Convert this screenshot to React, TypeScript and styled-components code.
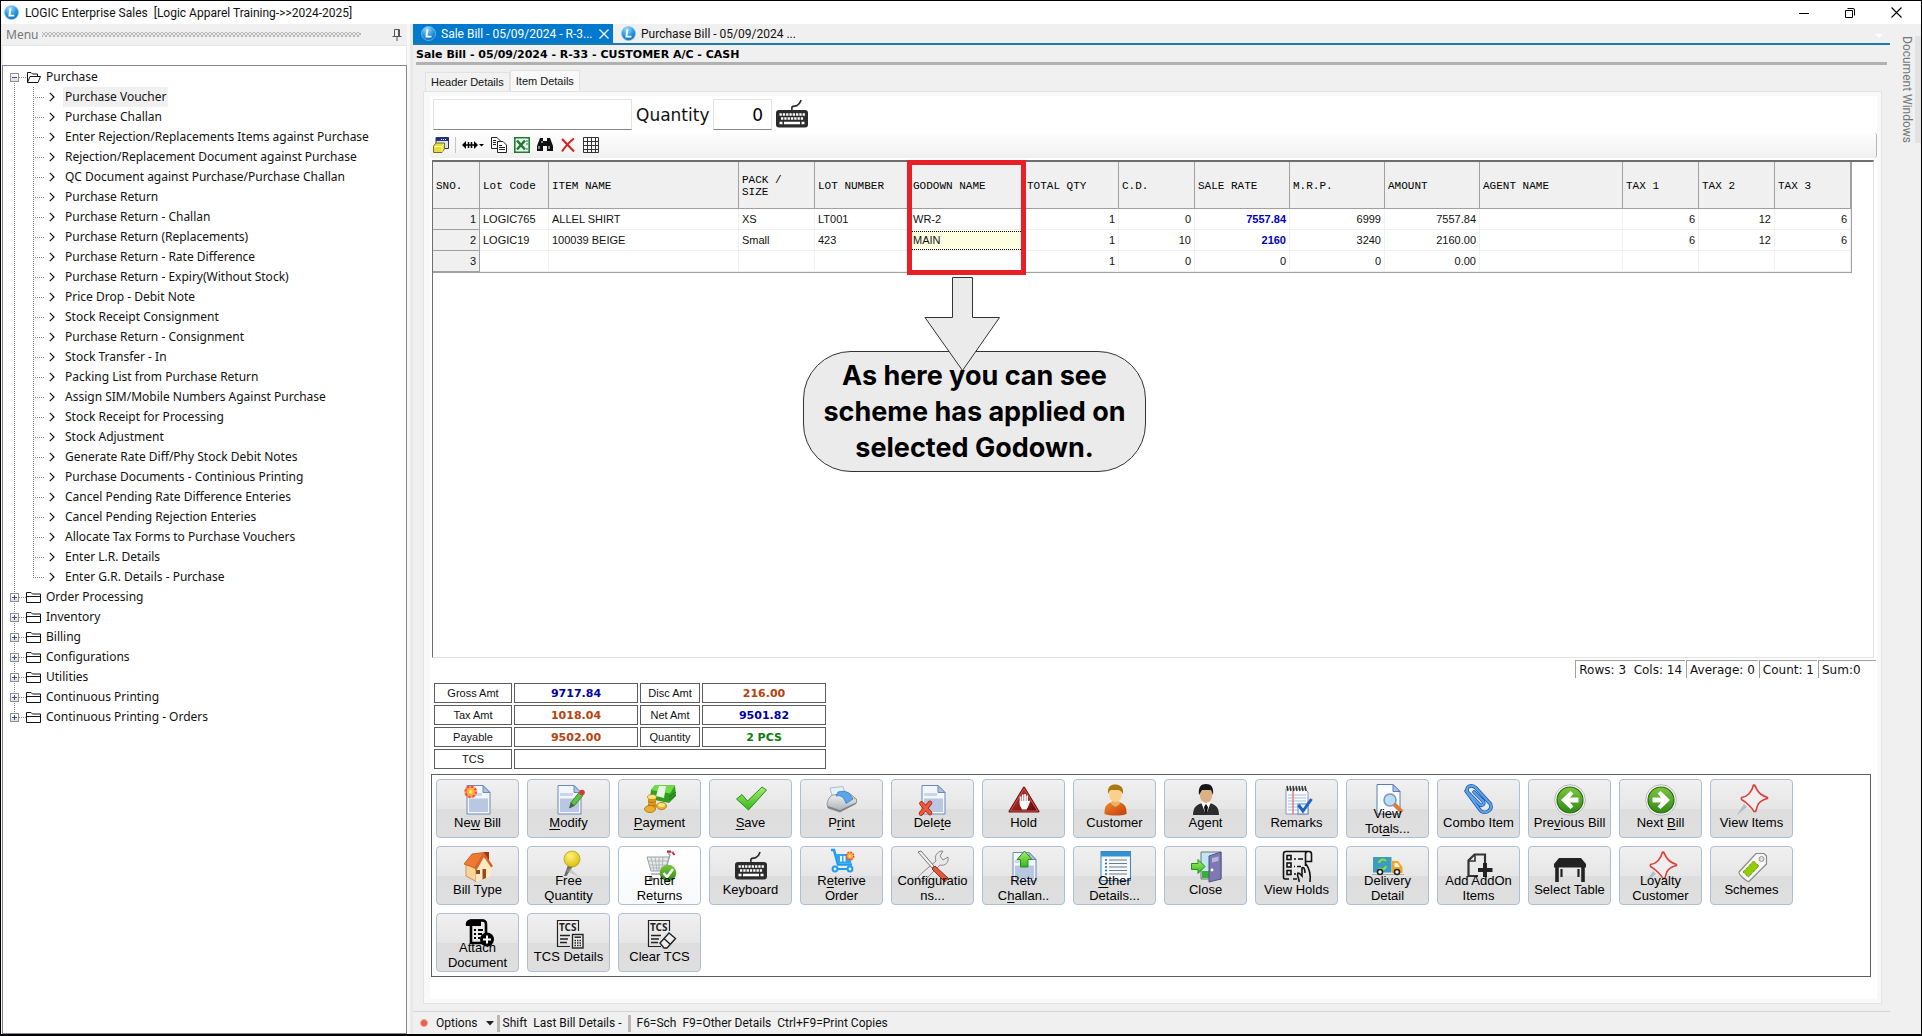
import React from "react";
import styled, { createGlobalStyle, css } from "styled-components";

const ui = `"Noto Sans", "Open Sans", sans-serif`;
const compact = `Roboto, "Noto Sans", sans-serif`;
const arial = `"Liberation Sans", Arial, sans-serif`;
const verdana = `"DejaVu Sans", Verdana, sans-serif`;
const mono = `"Liberation Mono", "Courier New", monospace`;

const Global = createGlobalStyle`
  *, *::before, *::after { box-sizing: border-box; }
  body { margin: 0; background: #fff; font: 12px/16px ${ui}; color: #111; }
  button, input { font: inherit; color: inherit; margin: 0; }
  button { cursor: pointer; }
  ul { list-style: none; margin: 0; padding: 0; }
  svg { display: block; flex: none; }
`;

/* ---------- window frame ---------- */
const Window = styled.div`
  min-height: 100vh;
  display: flex;
  flex-direction: column;
  background: #f0f0f0;
  border: 1px solid #000;
  border-bottom-width: 2px;
`;
const TitleBar = styled.header`
  display: flex;
  align-items: center;
  height: 23px;
  padding: 0 2px 0 3px;
  background: #fff;
`;
const AppName = styled.h1`
  flex: 1;
  margin: 0 0 0 6px;
  font: 400 12px/16px ${compact};
  white-space: pre;
`;
const WindowButton = styled.button`
  width: 46px;
  height: 22px;
  padding: 0;
  border: 0;
  background: none;
  display: grid;
  place-items: center;
`;
const Body = styled.div`
  flex: 1;
  display: flex;
  min-height: 0;
`;

/* ---------- menu ---------- */
const Sidebar = styled.nav`
  width: 406px;
  flex: none;
  display: flex;
  flex-direction: column;
  padding-left: 1px;
`;
const SidebarHead = styled.div`
  display: flex;
  align-items: center;
  gap: 4px;
  height: 21px;
  padding: 0 4px;
  color: #777;
`;
const Grip = styled.span`
  flex: 1;
  height: 5px;
  margin-right: 26px;
  background-image: radial-gradient(#b4b4b4 1px, transparent 1px), radial-gradient(#b4b4b4 1px, transparent 1px);
  background-size: 4px 4px;
  background-position: 0 0, 2px 2px;
`;
const PinButton = styled.button`
  padding: 0;
  border: 0;
  background: none;
`;
const MenuFilter = styled.input`
  height: 20px;
  border: 1px solid #e6e6e6;
  background: #fff;
  border-bottom: 0;
  outline: 0;
`;
const Tree = styled.ul`
  flex: 1;
  padding: 1px 0 0 7px;
  background: #fff;
  border: 1px solid #828790;
`;
const dotsDown = "repeating-linear-gradient(to bottom, #808080 0 1px, transparent 1px 2px)";
const dotsRight = "repeating-linear-gradient(to right, #808080 0 1px, transparent 1px 2px)";
const Branch = styled.div<{ $end?: "first" | "last" }>`
  display: flex;
  align-items: center;
  height: 20px;
  background-repeat: no-repeat;
  background-image: ${dotsDown}, ${dotsRight};
  background-size: 1px ${(p) => (p.$end ? "10px" : "100%")}, 8px 1px;
  background-position: 4px ${(p) => (p.$end === "first" ? "10px" : "0")}, 9px 10px;
`;
const Expander = styled.button`
  width: 9px;
  height: 9px;
  padding: 0;
  margin-right: 7px;
  border: 1px solid #919191;
  background: linear-gradient(#fff, #ddd);
  display: grid;
  place-items: center;
`;
const BranchLabel = styled.button`
  border: 0;
  background: none;
  padding: 0 0 0 5px;
  line-height: 20px;
`;
const Leaf = styled.li<{ $last?: boolean }>`
  display: flex;
  align-items: center;
  height: 20px;
  padding-left: 39px;
  gap: 8px;
  background-repeat: no-repeat;
  background-image: ${dotsDown}, ${dotsDown}, ${dotsRight};
  background-size: 1px 100%, 1px ${(p) => (p.$last ? "10px" : "100%")}, 11px 1px;
  background-position: 4px 0, 23px 0, 23px 10px;
`;
const LeafLabel = styled.button<{ $active?: boolean }>`
  border: 0;
  padding: 0 2px;
  line-height: 20px;
  white-space: nowrap;
  background: ${(p) => (p.$active ? "#f0f0f0" : "none")};
`;
const Splitter = styled.div`
  width: 6px;
  flex: none;
  background: #f8f8f8;
  border-right: 3px solid #e9e9e9;
`;

/* ---------- documents ---------- */
const Main = styled.main`
  flex: 1;
  min-width: 0;
  display: flex;
  flex-direction: column;
`;
const DocTabs = styled.div`
  display: flex;
  align-items: stretch;
  height: 21px;
  border-bottom: 2px solid #1e7aa8;
`;
const DocTab = styled.button<{ $active?: boolean }>`
  display: flex;
  align-items: center;
  gap: 5px;
  width: 200px;
  padding: 0 4px 0 8px;
  border: 0;
  text-align: left;
  font-family: ${compact};
  background: ${(p) => (p.$active ? "#0079cf" : "transparent")};
  color: ${(p) => (p.$active ? "#fff" : "#111")};
`;
const DocTabText = styled.span`
  flex: 1;
  white-space: nowrap;
`;
const TabsMenu = styled.button`
  margin-left: auto;
  padding: 6px 6px 0;
  border: 0;
  background: none;
`;
const DocTitle = styled.h2`
  margin: 0 3px 0 3px;
  height: 20px;
  font: 700 11px/19px ${verdana};
  color: #000;
  border-bottom: 3px solid #b1b1b1;
`;
const PageTabs = styled.div`
  display: flex;
  align-items: flex-end;
  height: 26px;
  padding-left: 12px;
`;
const PageTab = styled.button<{ $active?: boolean }>`
  height: ${(p) => (p.$active ? 21 : 19)}px;
  padding: 0 5px;
  font: 11px/16px ${arial};
  border: 1px solid #e2e2e2;
  border-bottom: 0;
  background: ${(p) => (p.$active ? "#f9f9f9" : "#f2f2f2")};
`;
const Page = styled.section`
  flex: 1;
  display: flex;
  margin: 0 8px 0 10px;
  padding: 4px;
  padding-left: 6px;
  background: #f9f9f9;
  border: 1px solid #e3e3e3;
`;
const Sheet = styled.div`
  flex: 1;
  min-width: 0;
  display: flex;
  flex-direction: column;
  background: #fff;
`;
const EntryRow = styled.div`
  display: flex;
  align-items: center;
  height: 37px;
  padding: 3px;
  gap: 4px;
`;
const EntryBox = styled.input<{ $w: number }>`
  width: ${(p) => p.$w}px;
  height: 31px;
  padding: 0 8px;
  border: 1px solid #e3e3e3;
  border-bottom-color: #868686;
  background: #fff;
  outline: 0;
  text-align: right;
  font: 17px/28px ${verdana};
  color: #000;
`;
const EntryLabel = styled.label`
  width: 73px;
  font: 17px/28px ${verdana};
`;
const PlainButton = styled.button`
  padding: 0;
  border: 0;
  background: none;
`;
const Tools = styled.div`
  display: flex;
  align-items: center;
  height: 25px;
  padding: 0 0 2px 3px;
  gap: 7px;
  border-right: 1px solid #b5b5b5;
  border-radius: 3px;
  background: linear-gradient(#fefefe, #f0f0f0);
`;
const ToolRule = styled.span`
  width: 1px;
  height: 16px;
  margin: 0 -1px;
  background: #c5c5c5;
`;

/* ---------- grid ---------- */
const GridArea = styled.div`
  position: relative;
  flex: 1;
  min-height: 300px;
  margin: 2px 3px 0 2px;
  border: 1px solid #e3e3e3;
  border-top: 2px solid #6e6e6e;
  border-left: 1px solid #6e6e6e;
`;
const Grid = styled.table`
  table-layout: fixed;
  width: 1419px;
  border-spacing: 0;
  border-right: 1px solid #a0a0a0;
  border-bottom: 1px solid #a0a0a0;
  font: 11px/16px ${arial};
`;
const HeadCell = styled.th`
  height: 47px;
  padding: 2px 3px 0;
  text-align: left;
  font: 11px/12px ${mono};
  color: #000;
  background: #f0f0f0;
  border-right: 1px solid #a0a0a0;
  border-bottom: 1px solid #a0a0a0;
  white-space: pre-line;
`;
const Cell = styled.td<{ $num?: boolean; $strong?: boolean; $picked?: boolean }>`
  height: 21px;
  padding: 0 3px 1px;
  text-align: ${(p) => (p.$num ? "right" : "left")};
  border-right: 1px solid #f0f0f0;
  border-bottom: 1px solid #f0f0f0;
  white-space: nowrap;
  ${(p) => p.$strong && css`color: #0000c0; font-weight: 700;`}
  ${(p) => p.$picked && css`background: #ffffe1; outline: 1px dotted #000; outline-offset: -2px;`}
`;
const RowHead = styled.th`
  padding: 0 3px 1px;
  text-align: right;
  font-weight: 400;
  background: #f0f0f0;
  border-right: 1px solid #a0a0a0;
  border-bottom: 1px solid #a0a0a0;
`;
const Marker = styled.div`
  position: absolute;
  left: 474px;
  top: -2px;
  width: 119px;
  height: 115px;
  border: 5px solid #e81f27;
`;
const Callout = styled.p`
  position: absolute;
  left: 370px;
  top: 189px;
  width: 343px;
  height: 121px;
  margin: 0;
  padding-top: 6px;
  border: 1px solid #333;
  border-radius: 48px;
  background: #ebebeb;
  text-align: center;
  font: 700 27px/36px Inter, sans-serif;
  color: #000;
`;
const CalloutText = styled.span`
  position: relative;
`;
const Arrow = styled.svg`
  position: absolute;
  left: 119px;
  top: -76px;
`;
const GridStatus = styled.div`
  display: flex;
  justify-content: flex-end;
  height: 20px;
  margin: 2px 1px 0 0;
  gap: 1px;
  font: 12px/18px ${verdana};
`;
const StatusCell = styled.span<{ $wide?: boolean }>`
  height: 18px;
  padding: 0 3px;
  white-space: pre;
  border-top: 1px solid #a0a0a0;
  border-left: 1px solid #a0a0a0;
  min-width: ${(p) => (p.$wide ? 58 : 0)}px;
`;

/* ---------- totals ---------- */
const Totals = styled.dl`
  display: grid;
  grid-template-columns: 78px 124px 60px 124px;
  grid-auto-rows: 20px;
  gap: 2px;
  margin: 3px 0 5px 4px;
`;
const TotalName = styled.dt`
  border: 1px solid #5d5d5d;
  text-align: center;
  font: 11px/18px ${arial};
`;
const TotalValue = styled.dd<{ $color?: string; $wide?: boolean }>`
  margin: 0;
  border: 1px solid #5d5d5d;
  text-align: center;
  font: 700 11px/19px ${verdana};
  color: ${(p) => p.$color};
  ${(p) => p.$wide && css`grid-column: span 3;`}
`;

/* ---------- command buttons ---------- */
const Commands = styled.div`
  display: flex;
  flex-wrap: wrap;
  align-content: flex-start;
  gap: 8px;
  margin: 0 6px 22px 1px;
  padding: 4px;
  border: 1px solid #5d5d5d;
`;
const Command = styled.button<{ $hot?: boolean }>`
  display: grid;
  justify-items: center;
  width: 83px;
  height: 59px;
  padding: 4px 0 0;
  border: 1px solid #aebfd4;
  border-radius: 4px;
  background: ${(p) =>
    p.$hot ? "linear-gradient(#fff, #f8f9fc)" : "linear-gradient(#f0f0f0, #e6e6e6 50%, #dddddd 51%, #dfdfdf)"};
  font: 13px/15px ${arial};
  color: #000;
`;
const CommandIcon = styled.svg`
  grid-area: 1 / 1;
  overflow: visible;
`;
const CommandText = styled.span<{ $double?: boolean }>`
  grid-area: 1 / 1;
  align-self: end;
  position: relative;
  padding-bottom: ${(p) => (p.$double ? 1 : 7)}px;
  text-underline-offset: 2px;
`;
const CommandLine = styled.span`
  display: block;
  white-space: pre;
`;

/* ---------- bottom bar and dock ---------- */
const BottomBar = styled.footer`
  display: flex;
  align-items: center;
  height: 23px;
  margin-top: 7px;
  padding-left: 7px;
  border-top: 1px solid #d4d4d4;
  white-space: pre;
  font-family: ${compact};
`;
const OptionsButton = styled.button`
  display: flex;
  align-items: center;
  gap: 8px;
  padding: 0;
  border: 0;
  background: none;
`;
const BarRule = styled.span`
  width: 3px;
  height: 17px;
  margin: 0 3px;
  background: #b8b8b8;
`;
const Dock = styled.aside`
  width: 31px;
  flex: none;
  display: flex;
  justify-content: flex-end;
  align-items: flex-start;
  padding-top: 12px;
`;
const DockTab = styled.button`
  writing-mode: vertical-rl;
  height: 107px;
  width: 22px;
  padding: 0;
  border: 0;
  border-right: 6px solid #e2e2e2;
  background: none;
  color: #777;
  font: 12px/16px ${compact};
  text-align: left;
  white-space: nowrap;
`;

/* ---------- icons ---------- */
const Logo = () => (
  <svg width="15" height="15" viewBox="0 0 15 15">
    <defs>
      <radialGradient id="logoBlue" cx=".4" cy=".2" r=".9">
        <stop offset="0" stopColor="#9fdcfa" />
        <stop offset=".5" stopColor="#2b9be6" />
        <stop offset="1" stopColor="#0a5cab" />
      </radialGradient>
    </defs>
    <circle cx="7.5" cy="7.5" r="7" fill="url(#logoBlue)" stroke="#8cc8ee" strokeWidth=".7" />
    <path d="M6.4 3.5 5.4 10.6H10.4" fill="none" stroke="#fff" strokeWidth="1.9" />
  </svg>
);

const FolderIcon = ({ open }: { open?: boolean }) => (
  <svg width="15" height="13" viewBox="0 0 15 13" fill="none" stroke="#111" strokeWidth="1">
    {open ? (
      <path d="M1.500 11.500V1.500H5L6.500 3H11.500V5M1.500 11.500 4 5.500H14.500L12 11.500Z" strokeLinejoin="round" />
    ) : (
      <path d="M.5 11.500V1.500H5L6.500 3H14.500V11.500ZM.5 5.500H14.500" strokeLinejoin="round" />
    )}
  </svg>
);

const Sheet32 = () => (
  <>
    <path d="M5 1.500H21L28 8.500V30H5Z" fill="#f3f7fd" stroke="#6d89b5" />
    <path d="M21 1.500V8.500H28Z" fill="#a9c4e8" stroke="#6d89b5" />
    <path d="M7 9H20V12H7Z" fill="#c9d6ec" />
    <path d="M7 14.500H26V28H7Z" fill="#b9c7e3" />
  </>
);
const Sun = ({ x, y }: { x: number; y: number }) => (
  <g>
    <circle cx={x} cy={y} r="6.3" fill="#ff5a3c" opacity=".55" />
    <circle cx={x} cy={y} r="5" fill="none" stroke="#ff4a2a" strokeWidth="2.600" strokeDasharray="2 1.900" />
    <circle cx={x} cy={y} r="4" fill="#ffb52a" />
    <circle cx={x} cy={y} r="1.800" fill="#ffe46a" />
  </g>
);
const KeyboardArt = () => (
  <>
    <path d="M16 11C15 6 18 8 21 6.500c3-1.200 3-2.500 4-5.500" fill="none" stroke="#2b2b2b" strokeWidth="1.700" />
    <rect x="0" y="11" width="32" height="17.500" rx="3" fill="#2b2b2b" />
    <path d="M3.500 15.500H29M5 19.500H28" stroke="#fff" strokeWidth="2.400" strokeDasharray="2.300 1" />
    <path d="M3.500 24H6.500M8 24H24M25.500 24H28.500" stroke="#fff" strokeWidth="2.400" />
  </>
);
const TcsSheet = () => (
  <>
    <path d="M25.500 13V2.500H4.500V28.500H17" fill="none" stroke="#222" strokeWidth="1.200" />
    <text x="6" y="13" fontSize="10" fontWeight="700" fontFamily="Noto Sans, sans-serif" fill="#222">TCS</text>
    <path d="M7 17.500H17M7 21H15M7 24.500H14" stroke="#222" strokeWidth="1.300" />
  </>
);
const RedPin = () => (
  <>
    <path d="M.5 31.500 8 20 11 23Z" fill="#b3bfc6" />
    <path d="M18.500 1 21.500 6.500C23.500 10 27 12 31.500 13.500V14.500C27 15.500 24 17 22 20.500 21 22.500 20.500 26 19.500 27.500H18C16.500 24.500 11 18.500 5.500 15.500V13.500C11 13 16 8 17.500 1Z" fill="#f0eeee" stroke="#d9413c" strokeWidth="1.600" strokeLinejoin="round" />
  </>
);
const RoundArrow = ({ back }: { back?: boolean }) => (
  <g transform={back ? "matrix(-1 0 0 1 32 0)" : undefined}>
    <circle cx="16" cy="16" r="15.300" fill="#fff" stroke="#a5a5a5" strokeWidth=".8" />
    <circle cx="16" cy="16" r="13" fill="url(#green)" stroke="#2a6b10" strokeWidth="1.200" />
    <path d="M7.500 13.500H16L12.500 9.500 15.500 7 25 16 15.500 25 12.500 22.500 16 18.500H7.500Z" fill="#fff" />
  </g>
);

const art: Record<string, React.ReactNode> = {
  newBill: <><Sheet32 /><Sun x={8.7} y={7.7} /></>,
  modify: (
    <>
      <Sheet32 />
      <path d="M16.500 24 18 18.500 26 8.500 30 11.500 21.500 21.500Z" fill="#5dc23c" stroke="#2c7a1c" strokeWidth=".8" />
      <path d="M16.500 24 18 18.500 21.500 21.500Z" fill="#565656" />
      <circle cx="29" cy="8.500" r="2.800" fill="#d63a2c" />
    </>
  ),
  payment: (
    <>
      <path d="M7 6 11 1 31 1.500 32 12 25 19 6 15Z" fill="#2f9e22" />
      <path d="M7 6 11 1 31 1.500 26 9.500Z" fill="#6fdc4a" />
      <path d="M15 2 22 2 20 14 12 12Z" fill="#e9f7e2" />
      <path d="M25 13 32 8M25 16 32 11" stroke="#1d7413" />
      <path d="M4 13v13h8V13Z" fill="#d99a1d" />
      <ellipse cx="8" cy="13" rx="4.500" ry="2.500" fill="#ffe27a" stroke="#b97d12" strokeWidth=".7" />
      <path d="M4 17c2 2 6 2 8 0M4 20.500c2 2 6 2 8 0" fill="none" stroke="#a86d0c" strokeWidth=".8" />
      <ellipse cx="6" cy="25" rx="5.500" ry="3.500" fill="#e8b02c" stroke="#a86d0c" strokeWidth=".8" />
      <ellipse cx="17.500" cy="22" rx="5" ry="3.600" fill="#e8b02c" stroke="#a86d0c" strokeWidth=".8" />
      <ellipse cx="17.500" cy="21" rx="3.500" ry="2" fill="#ffe27a" />
    </>
  ),
  save: <path d="M1.500 15 7 10.500 12.500 17 27 3 31.500 6 13.500 26Z" fill="url(#lime)" stroke="#2c8d1d" strokeWidth="1" strokeLinejoin="round" />,
  print: (
    <>
      <path d="M4 4 17 2.500 20 13 7 15Z" fill="#e7f1fa" stroke="#9db1c4" strokeWidth=".8" />
      <path d="M1 20C2 15 4 12 7 11L23 9 30.500 15 30.500 19 14 28 2 24Z" fill="url(#silver)" stroke="#8a9096" strokeWidth=".9" />
      <path d="M2 22 14 26 30 18.500V20L14 28 2 24Z" fill="#7f858b" />
      <path d="M12 8C19 6 24 8 27 15L20 19.500C18 13 15 11 10 12Z" fill="#5aa6ea" stroke="#2f74bb" strokeWidth=".7" />
      <circle cx="28.500" cy="14.500" r="1" fill="#f0a030" />
    </>
  ),
  delete: (
    <>
      <Sheet32 />
      <path d="M4.500 19.500 13 29M13 19 4 29.500" stroke="#a8200e" strokeWidth="4.600" strokeLinecap="round" />
      <path d="M4.500 19.500 13 29M13 19 4 29.500" stroke="#f2583a" strokeWidth="3.200" strokeLinecap="round" />
    </>
  ),
  hold: (
    <>
      <path d="M16 3.500 30.500 27.500H1.500Z" fill="url(#darkRed)" stroke="#7a0c0c" strokeWidth="2" strokeLinejoin="round" />
      <path d="M16 4.500 29.500 27H2.500Z" fill="none" stroke="#e6a0a0" strokeWidth=".6" />
      <path d="M12.500 13V18M14.700 11V18M17 10.500V18M19.200 12V19" stroke="#fff" strokeWidth="1.700" strokeLinecap="round" />
      <path d="M11.700 17H20L22.500 16.500 20 23 18.500 25.500H14L11.700 21Z" fill="#fff" />
    </>
  ),
  customer: (
    <>
      <path d="M5.500 30C5 21 9 18 16.500 18S28 21 27.500 30C22 32 11 32 5.500 30Z" fill="url(#orange)" />
      <path d="M13 17H20L21 20 16.500 23 12 20Z" fill="#f0b060" />
      <ellipse cx="16.500" cy="10" rx="6.500" ry="8" fill="#fbd08d" />
      <path d="M9 10C8 2 13 0 17 .5S25 3 24 10C22 7 21 6 19 6H12C10 7 10 8 9 10Z" fill="#a87a14" />
    </>
  ),
  agent: (
    <>
      <path d="M3 31C3 22 8 19 16 19S29 22 29 31Z" fill="#2c2c2e" />
      <path d="M11 18H21L16 31Z" fill="#fff" />
      <path d="M16 20 18 23 16.500 31H15.500L14 23Z" fill="#111" />
      <ellipse cx="16" cy="10.500" rx="6.300" ry="8.500" fill="#d9b184" />
      <path d="M9 11C8 3 11 0 16 0S24 3 23 11L21 6H12Z" fill="#161616" />
    </>
  ),
  remarks: (
    <>
      <path d="M5 5H24L27 8V30H5Z" fill="#fafcff" stroke="#8a93bf" />
      <path d="M7 11H25M7 14H25M7 17H25M7 20H25M7 23H25M7 26H25" stroke="#9cc0ea" />
      <path d="M12 6V30" stroke="#e8766c" strokeWidth="1.400" />
      <path d="M7 7 6 2M10 7 9 2M13 7 12 2M16 7 15 2M19 7 18 2M22 7 21 2M25 7 24 2" stroke="#333" strokeWidth="1.500" />
      <rect x="17" y="20" width="10" height="10" fill="#eef4fb" stroke="#6d86b0" />
      <path d="M17.500 21 22 27 30.500 15" fill="none" stroke="#1b63c4" strokeWidth="3" />
    </>
  ),
  viewTotals: (
    <>
      <path d="M5 .5H21L28 7.500V30H5Z" fill="#f8fbff" stroke="#5f7fb4" />
      <path d="M21 .5V7.500H28Z" fill="#a9c4e8" stroke="#5f7fb4" />
      <path d="M22 20 30 28" stroke="#e07a35" strokeWidth="4" />
      <circle cx="18" cy="16" r="6" fill="#b7e0f7" stroke="#8294a8" strokeWidth="1.500" />
    </>
  ),
  combo: (
    <g fill="none" strokeLinecap="round">
      <path d="M3 7 17 26C21 31 30 27 27.500 20L13 4C9 0 2 2 4.500 8L16 20C19 23 22 20 20 17L11 8" stroke="#1f5ca8" strokeWidth="3.600" />
      <path d="M3 7 17 26C21 31 30 27 27.500 20L13 4C9 0 2 2 4.500 8L16 20C19 23 22 20 20 17L11 8" stroke="#5ea2ec" strokeWidth="2" />
    </g>
  ),
  prev: <RoundArrow back />,
  next: <RoundArrow />,
  pin: <RedPin />,
  house: (
    <>
      <path d="M22 1H27V9H22Z" fill="#a33318" />
      <path d="M4 14 14 12 14 30.500 4 25Z" fill="#fbd49a" stroke="#c78339" strokeWidth=".8" />
      <path d="M14 18V30.500L29 25V15L23 6Z" fill="#ffeac2" />
      <path d="M2 13 10 3 22 1.500 13 17Z" fill="#ee7a32" stroke="#c0501a" strokeWidth=".8" />
      <path d="M22 1.500 31 15 29 16.500 22 6 14 20 12.500 17Z" fill="#d8642a" />
      <path d="M14 19h4v4h-4Z" fill="#8c4b20" />
      <path d="M20.500 18H24V27L20.500 28.500Z" fill="#9a4a1c" />
    </>
  ),
  ballPin: (
    <>
      <path d="M15 14 11 25H13.500L20 15Z" fill="#6c6c6c" />
      <path d="M13 20 26 26 17 17Z" fill="#aaa" opacity=".5" />
      <circle cx="19" cy="8" r="8" fill="url(#yellow)" stroke="#a58e00" strokeWidth=".6" />
    </>
  ),
  returns: (
    <>
      <path d="M3 6H25L22 20H7Z" fill="#e8eaec" stroke="#9ba1a6" />
      <path d="M7 6 10 20M11 6 13 20M15 6V20M19 6 18 20M4 10H24M5 14H23M6 17H22" stroke="#a5abb0" strokeWidth=".8" />
      <path d="M30 1 24 1.500 26 4 20 23H7" fill="none" stroke="#a3a8ad" strokeWidth="1.400" />
      <path d="M23 .5H27M28.500 1.500 30.500 4" stroke="#c8242c" strokeWidth="2" />
      <circle cx="7" cy="28" r="2" fill="#777" />
      <circle cx="24" cy="22" r="8.300" fill="url(#green)" />
      <path d="M19.500 22 23 26 29 18" fill="none" stroke="#fff" strokeWidth="2.600" />
    </>
  ),
  keyboard: <KeyboardArt />,
  reterive: (
    <>
      <path d="M5-1H8L12 13.500H26" fill="none" stroke="#1f9bf0" strokeWidth="2.600" />
      <path d="M9 3H26L25 12H12Z" fill="#2aa6f5" />
      <path d="M15 5V10.500M18.500 5V10.500" stroke="#fff" strokeWidth="2" />
      <path d="M8 18H25" stroke="#1f9bf0" strokeWidth="2" />
      <circle cx="9" cy="18" r="2.400" fill="#fff" stroke="#1f9bf0" strokeWidth="2" />
      <circle cx="24" cy="18" r="2.400" fill="#fff" stroke="#1f9bf0" strokeWidth="2" />
      <g transform="translate(24 5) scale(.7)"><Sun x={0} y={0} /></g>
    </>
  ),
  config: (
    <>
      <path d="M2 29C0 26 3 24 5 22L19 10C17 5 20 0 26 0L23 5 26 9 31 6C32 12 28 15 23 14L8 29C6 31 3 31 2 29Z" fill="#e9e9e9" stroke="#8c8c8c" />
      <path d="M1 1 4 0 17 15 15 17Z" fill="#f2f2f2" stroke="#777" />
      <path d="M15 18 18 15 31 27 28 31Z" fill="#df5a3e" stroke="#96301c" />
    </>
  ),
  retv: (
    <>
      <Sheet32 />
      <path d="M16.500 0 24 8.500H20V16H12.500V8.500H9Z" fill="url(#lime)" stroke="#2c8d1d" />
    </>
  ),
  other: (
    <>
      <rect x="2" y=".5" width="29.500" height="29" fill="#f4f9fd" stroke="#3c86bd" />
      <path d="M2 1H31.500V5.500H2Z" fill="#3490cf" />
      <path d="M6 9H8M6 12.500H8M6 16H8M6 19.500H8M6 23H8" stroke="#2a66a3" strokeWidth="1.300" />
      <path d="M10 9H28M10 12.500H28M10 16H28M10 19.500H28M10 23H28" stroke="#6f7b86" strokeWidth="1.100" />
    </>
  ),
  close: (
    <>
      <path d="M11 1H31V28H11Z" fill="#bfe6f2" stroke="#777" />
      <path d="M12 20H20V27H12Z" fill="#37b034" />
      <path d="M19 5 31 1V28L19 31Z" fill="#7c79b5" stroke="#555285" />
      <path d="M22 7 28.500 5.500V10L22 11.500Z" fill="#b7b5dc" />
      <circle cx="22" cy="19" r="1.400" fill="#fff" />
      <path d="M1.500 12.500H8V8.500L15 15.500 8 22.500V18.500H1.500Z" fill="url(#lime)" stroke="#2c8d1d" />
    </>
  ),
  holds: (
    <g fill="none" stroke="#111" strokeWidth="1.600">
      <path d="M8 28H4C3 28 2.500 27 2.500 26V3Q2.500.5 5 .5H28Q30.500.5 30.500 3V10.500H25M27 .5Q24.500.5 24.500 3V15M12 28H16" />
      <rect x="6" y="4.500" width="4" height="4" />
      <rect x="6" y="12" width="4" height="4" />
      <rect x="6" y="19.500" width="4" height="4" />
      <path d="M13 8H15M17 8H22M13 15.500H14M16 15.500H20M13 23H15" />
      <path d="M18 31C19 28 15 25 17 22 19 22 20 24 21 25V17C24 15 24 22 24 22M25 13C28 17 30 22 29 31" />
    </g>
  ),
  delivery: (
    <>
      <path d="M1 6H19.500V21.500H1Z" fill="#3a9cc0" />
      <path d="M20 10H26L30.500 16V22H20Z" fill="#f3a322" />
      <path d="M22.500 12H25.500L28 16H22.500Z" fill="#fdf3dc" />
      <path d="M7 12A4 4 0 0 1 14 10M14 15A4 4 0 0 1 7 17" fill="none" stroke="#8fdc3c" strokeWidth="2" />
      <path d="M0 23.500H32" stroke="#aaa" />
      <circle cx="8" cy="21" r="2.500" fill="#fff" stroke="#222" strokeWidth="1.600" />
      <circle cx="25" cy="21" r="2.500" fill="#fff" stroke="#222" strokeWidth="1.600" />
    </>
  ),
  addOn: (
    <>
      <path d="M22 13V3.500H11.500L5.500 9.500V25H15" fill="none" stroke="#333" strokeWidth="2.200" />
      <path d="M12 3V10H5" fill="none" stroke="#333" strokeWidth="1.600" />
      <path d="M22 12V26M15 19H29.500" stroke="#222" strokeWidth="4" />
    </>
  ),
  table: (
    <>
      <path d="M5 7H27L32 13V16.500H0V13Z" fill="#222" />
      <path d="M3 15V31M29 15V31" stroke="#222" strokeWidth="3.600" />
      <path d="M7.500 18V26M24.500 18V26" stroke="#222" strokeWidth="2.200" />
    </>
  ),
  schemes: (
    <>
      <path d="M3 21 20 2.500H28L30.500 5V13L13 30.500C11 31 2 23 3 21Z" fill="#f7f7f7" stroke="#8a8a8a" strokeWidth="1.200" />
      <circle cx="25.500" cy="8" r="2.500" fill="#ddd" stroke="#999" />
      <path d="M7 21 17.500 10 23 15 12.500 26Z" fill="#93cc00" stroke="#4f7d00" strokeDasharray="1 1" />
    </>
  ),
  attach: (
    <>
      <path d="M9 7V25H20M24 15V6C24 3 22 2.500 20 2.500H8" fill="none" stroke="#000" strokeWidth="2.600" />
      <path d="M4 8C3 3 6 1.500 9 1.500H23L19 3V8Z" fill="#000" />
      <path d="M12 12H14M16 12H21M12 16H14M16 16H20M12 20H14M16 20H18" stroke="#000" strokeWidth="2" />
      <circle cx="25" cy="21.500" r="7" fill="#000" />
      <path d="M25 17.500V25.500M21 21.500H29" stroke="#fff" strokeWidth="2" />
    </>
  ),
  tcs: (
    <>
      <TcsSheet />
      <rect x="19.500" y="16.500" width="10.500" height="13.500" fill="#eee" stroke="#222" strokeWidth="1.400" />
      <path d="M21.500 19.200H28" stroke="#222" strokeWidth="1.500" />
      <path d="M21.500 22.500H28M21.500 25H28M21.500 27.500H28" stroke="#222" strokeWidth="1.500" strokeDasharray="1.500 1" />
    </>
  ),
  clearTcs: (
    <>
      <TcsSheet />
      <path d="M16 25 25 15 31.500 20.500 23 30H20ZM20 20.500 26.500 26.500" fill="#eee" stroke="#222" strokeWidth="1.400" />
    </>
  ),
};

const Defs = styled.svg`
  position: absolute;
`;
const Gradients = () => (
  <Defs width="0" height="0" aria-hidden="true">
    <defs>
      <linearGradient id="green" x2="0" y2="1"><stop stopColor="#7cc63e" /><stop offset="1" stopColor="#2f8a17" /></linearGradient>
      <linearGradient id="lime" x2="0" y2="1"><stop stopColor="#a5f06a" /><stop offset="1" stopColor="#35b51f" /></linearGradient>
      <linearGradient id="silver" x2="0" y2="1"><stop stopColor="#f4f5f6" /><stop offset="1" stopColor="#a9aeb4" /></linearGradient>
      <linearGradient id="darkRed" x2="1" y2="1"><stop stopColor="#e23a2c" /><stop offset="1" stopColor="#5d0505" /></linearGradient>
      <linearGradient id="orange" x2="1" y2="1"><stop stopColor="#f08c2c" /><stop offset="1" stopColor="#c23a0c" /></linearGradient>
      <radialGradient id="yellow" cx=".4" cy=".3" r=".8"><stop stopColor="#fff27a" /><stop offset="1" stopColor="#d6b800" /></radialGradient>
    </defs>
  </Defs>
);

/* ---------- data ---------- */
const purchaseItems = [
  "Purchase Voucher", "Purchase Challan", "Enter Rejection/Replacements Items against Purchase",
  "Rejection/Replacement Document against Purchase", "QC Document against Purchase/Purchase Challan",
  "Purchase Return", "Purchase Return - Challan", "Purchase Return (Replacements)",
  "Purchase Return - Rate Difference", "Purchase Return - Expiry(Without Stock)", "Price Drop - Debit Note",
  "Stock Receipt Consignment", "Purchase Return - Consignment", "Stock Transfer - In",
  "Packing List from Purchase Return", "Assign SIM/Mobile Numbers Against Purchase",
  "Stock Receipt for Processing", "Stock Adjustment", "Generate Rate Diff/Phy Stock Debit Notes",
  "Purchase Documents - Continious Printing", "Cancel Pending Rate Difference Enteries",
  "Cancel Pending Rejection Enteries", "Allocate Tax Forms to Purchase Vouchers", "Enter L.R. Details",
  "Enter G.R. Details - Purchase",
];
const branches = [
  "Order Processing", "Inventory", "Billing", "Configurations", "Utilities",
  "Continuous Printing", "Continuous Printing - Orders",
];

const columns: { name: string; width: number; num?: boolean }[] = [
  { name: "Lot Code", width: 69 }, { name: "ITEM NAME", width: 190 }, { name: "PACK /\nSIZE", width: 76 },
  { name: "LOT NUMBER", width: 95 }, { name: "GODOWN NAME", width: 114 },
  { name: "TOTAL QTY", width: 95, num: true }, { name: "C.D.", width: 76, num: true },
  { name: "SALE RATE", width: 95, num: true }, { name: "M.R.P.", width: 95, num: true },
  { name: "AMOUNT", width: 95, num: true }, { name: "AGENT NAME", width: 143 },
  { name: "TAX 1", width: 76, num: true }, { name: "TAX 2", width: 76, num: true }, { name: "TAX 3", width: 76, num: true },
];
const rows = [
  ["LOGIC765", "ALLEL SHIRT", "XS", "LT001", "WR-2", "1", "0", "7557.84", "6999", "7557.84", "", "6", "12", "6"],
  ["LOGIC19", "100039 BEIGE", "Small", "423", "MAIN", "1", "10", "2160", "3240", "2160.00", "", "6", "12", "6"],
  ["", "", "", "", "", "1", "0", "0", "0", "0.00", "", "", "", ""],
];

/* "_" precedes the access-key letter */
const commands: [string, string][] = [
  ["Ne_w Bill", "newBill"], ["_Modify", "modify"], ["_Payment", "payment"], ["_Save", "save"], ["P_rint", "print"],
  ["Dele_te", "delete"], ["Hold", "hold"], ["Customer", "customer"], ["Agent", "agent"], ["Remarks", "remarks"],
  ["View\nTot_als...", "viewTotals"], ["Combo Item", "combo"], ["Pre_vious Bill", "prev"], ["Next _Bill", "next"],
  ["View Items", "pin"],
  ["Bill Type", "house"], ["Free\nQuantity", "ballPin"], ["Enter\nRet_urns", "returns"], ["Keyboard", "keyboard"],
  ["R_eterive\nOrder", "reterive"], ["Confi_guratio\nns...", "config"], ["Retv\nC_hallan..", "retv"],
  ["_Other\nDetails...", "other"], ["Close", "close"], ["View Holds", "holds"], ["Delivery\nDetail", "delivery"],
  ["Add AddOn\nItems", "addOn"], ["Select Table", "table"], ["Loyalty\nCustomer", "pin"], ["Schemes", "schemes"],
  ["Attach\nDocument", "attach"], ["TCS Details", "tcs"], ["Clear TCS", "clearTcs"],
];

const withAccessKey = (label: string) => {
  const at = label.indexOf("_");
  if (at < 0) return label;
  return <>{label.slice(0, at)}<u>{label[at + 1]}</u>{label.slice(at + 2)}</>;
};

const blue = "#0000a8";
const rust = "#b5420f";

export default function App() {
  return (
    <Window>
      <Global />
      <Gradients />
      <TitleBar>
        <Logo />
        <AppName>{"LOGIC Enterprise Sales  [Logic Apparel Training->>2024-2025]"}</AppName>
        <WindowButton aria-label="Minimize">
          <svg width="10" height="10"><path d="M0 5.500H10" stroke="#000" /></svg>
        </WindowButton>
        <WindowButton aria-label="Restore">
          <svg width="10" height="10" fill="none" stroke="#000">
            <path d="M.5 2.500H7.500V9.500H.5ZM2.500.5H8Q9.500.5 9.500 2V7.500" />
          </svg>
        </WindowButton>
        <WindowButton aria-label="Close">
          <svg width="11" height="11"><path d="M.5.5 10.500 10.500M10.500.5.5 10.500" stroke="#000" strokeWidth="1.100" /></svg>
        </WindowButton>
      </TitleBar>

      <Body>
        <Sidebar>
          <SidebarHead>
            Menu
            <Grip />
            <PinButton aria-label="Pin menu">
              <svg width="12" height="12" fill="none" stroke="#555"><path d="M3.500 7.500V.5H8.500V7.500M7.500 1V7M1.500 7.500H10.500M6 8V12" /></svg>
            </PinButton>
          </SidebarHead>
          <MenuFilter aria-label="Search menu" />
          <Tree>
            <li>
              <Branch $end="first">
                <Expander aria-label="Collapse">
                  <svg width="5" height="5"><path d="M0 2.500H5" stroke="#3a4f8c" /></svg>
                </Expander>
                <FolderIcon open />
                <BranchLabel>Purchase</BranchLabel>
              </Branch>
              <ul>
                {purchaseItems.map((t, i) => (
                  <Leaf key={t} $last={i === purchaseItems.length - 1}>
                    <svg width="6" height="10"><path d="M.8.800 5 5 .8 9.200" fill="none" stroke="#111" strokeWidth="1.200" /></svg>
                    <LeafLabel $active={i === 0}>{t}</LeafLabel>
                  </Leaf>
                ))}
              </ul>
            </li>
            {branches.map((t, i) => (
              <li key={t}>
                <Branch $end={i === branches.length - 1 ? "last" : undefined}>
                  <Expander aria-label={`Expand ${t}`}>
                    <svg width="5" height="5"><path d="M0 2.500H5M2.500 0V5" stroke="#3a4f8c" /></svg>
                  </Expander>
                  <FolderIcon />
                  <BranchLabel>{t}</BranchLabel>
                </Branch>
              </li>
            ))}
          </Tree>
        </Sidebar>
        <Splitter />

        <Main>
          <DocTabs>
            <DocTab $active>
              <Logo />
              <DocTabText>Sale Bill - 05/09/2024 - R-3...</DocTabText>
              <svg width="14" height="10"><path d="M2.500.5 11.500 9.500M11.500.5 2.500 9.500" stroke="#fff" strokeWidth="1.300" /></svg>
            </DocTab>
            <DocTab>
              <Logo />
              <DocTabText>Purchase Bill - 05/09/2024 ...</DocTabText>
            </DocTab>
            <TabsMenu aria-label="Open documents">
              <svg width="10" height="5"><path d="M1 0H9L5 4Z" fill="#fff" /></svg>
            </TabsMenu>
          </DocTabs>
          <DocTitle>Sale Bill - 05/09/2024 - R-33 - CUSTOMER A/C - CASH</DocTitle>
          <PageTabs>
            <PageTab>Header Details</PageTab>
            <PageTab $active>Item Details</PageTab>
          </PageTabs>

          <Page>
            <Sheet>
              <EntryRow>
                <EntryBox $w={199} aria-label="Item code" />
                <EntryLabel htmlFor="qty">Quantity</EntryLabel>
                <EntryBox $w={59} id="qty" defaultValue="0" />
                <PlainButton aria-label="On-screen keyboard">
                  <svg width="33" height="32" viewBox="0 0 33 32"><KeyboardArt /></svg>
                </PlainButton>
              </EntryRow>
              <Tools>
                <PlainButton aria-label="Layout">
                  <svg width="16" height="16">
                    <path d="M3 .5H15.500V11.500H3Z" fill="#dfe4f2" stroke="#334" />
                    <path d="M3 .5H15.500V4H3Z" fill="#24307a" />
                    <path d="M8 2.500H14" stroke="#fff" strokeDasharray="1 1" />
                    <path d="M.5 9 3 6H11.500V11.500L9 15.500H.5Z" fill="#e6dc3c" stroke="#77701a" />
                    <path d="M1 9.500H9V15M9 9 11 7" fill="none" stroke="#fffbb0" />
                  </svg>
                </PlainButton>
                <ToolRule />
                <PlainButton aria-label="Column width">
                  <svg width="22" height="16"><path d="M0 8 4 4V12ZM16 8 12 4V12Z" fill="#000" /><path d="M2 8H14M6.500 5V11M9.500 5V11" stroke="#000" strokeWidth="1.500" /><path d="M17 7H22L19.500 9.500Z" fill="#000" /></svg>
                </PlainButton>
                <PlainButton aria-label="Copy">
                  <svg width="16" height="16" fill="#fff" stroke="#222"><path d="M.5.500H6L9.500 4V11.500H.5Z" /><path d="M6.500 4.500H12L15.500 8V15.500H6.500Z" /><path d="M2 3.500H5M2 5.500H5M2 7.500H5M8 8.500H11M8 10.500H14M8 12.500H14" /></svg>
                </PlainButton>
                <PlainButton aria-label="Export to Excel">
                  <svg width="16" height="16"><path d="M.8.800H15.200V15.200H.8Z" fill="#eef7ee" stroke="#1f7a34" strokeWidth="1.600" /><path d="M3 3.500 11 12.500M11 3.500 3 12.500" stroke="#1f7a34" strokeWidth="2.600" /><path d="M12 4H14M12 7H14M12 12H14" stroke="#1f7a34" /></svg>
                </PlainButton>
                <PlainButton aria-label="Find">
                  <svg width="16" height="16"><path d="M3 1H6V4H10V1H13L16 9V14H10V9H6V14H0V9Z" fill="#111" /><path d="M2 9V12M12 9V12M5 4V6" stroke="#fff" /></svg>
                </PlainButton>
                <PlainButton aria-label="Remove">
                  <svg width="16" height="16"><path d="M2 2 14 14.500M14 1.500C9 5 5 10 2 14.500" fill="none" stroke="#d32020" strokeWidth="2" /></svg>
                </PlainButton>
                <PlainButton aria-label="Grid lines">
                  <svg width="16" height="16"><path d="M.5.500H15.500V15.500H.5ZM4.500 0V16M8.500 0V16M12.500 0V16M0 4.500H16M0 8.500H16M0 12.500H16" fill="none" stroke="#333" /></svg>
                </PlainButton>
              </Tools>

              <GridArea>
                <Grid>
                  <colgroup>
                    <col width={47} />
                    {columns.map((c) => <col key={c.name} width={c.width} />)}
                  </colgroup>
                  <thead>
                    <tr>
                      <HeadCell scope="col">SNO.</HeadCell>
                      {columns.map((c) => <HeadCell scope="col" key={c.name}>{c.name}</HeadCell>)}
                    </tr>
                  </thead>
                  <tbody>
                    {rows.map((r, i) => (
                      <tr key={i}>
                        <RowHead scope="row">{i + 1}</RowHead>
                        {r.map((v, j) => (
                          <Cell key={j} $num={columns[j].num} $strong={j === 7 && i < 2} $picked={j === 4 && i === 1}>{v}</Cell>
                        ))}
                      </tr>
                    ))}
                  </tbody>
                </Grid>
                <Marker />
                <Callout>
                  <Arrow width="79" height="98" viewBox="0 0 79 98">
                    <path d="M29.500 1.500H49.500V41.500H76.500L39.500 94.500 2 41.500H29.500Z" fill="#ebebeb" stroke="#333" />
                  </Arrow>
                  <CalloutText>As here you can see<br />scheme has applied on<br />selected Godown.</CalloutText>
                </Callout>
              </GridArea>
              <GridStatus>
                <StatusCell>{"Rows: 3  Cols: 14"}</StatusCell>
                <StatusCell>Average: 0</StatusCell>
                <StatusCell>Count: 1</StatusCell>
                <StatusCell $wide>Sum:0</StatusCell>
              </GridStatus>

              <Totals>
                <TotalName>Gross Amt</TotalName><TotalValue $color={blue}>9717.84</TotalValue>
                <TotalName>Disc Amt</TotalName><TotalValue $color={rust}>216.00</TotalValue>
                <TotalName>Tax Amt</TotalName><TotalValue $color={rust}>1018.04</TotalValue>
                <TotalName>Net Amt</TotalName><TotalValue $color={blue}>9501.82</TotalValue>
                <TotalName>Payable</TotalName><TotalValue $color={rust}>9502.00</TotalValue>
                <TotalName>Quantity</TotalName><TotalValue $color="#0c7d0c">2 PCS</TotalValue>
                <TotalName>TCS</TotalName><TotalValue $wide />
              </Totals>

              <Commands>
                {commands.map(([label, icon]) => (
                  <Command key={label} $hot={icon === "returns"}>
                    <CommandIcon width="32" height="32" viewBox="0 0 32 32">{art[icon]}</CommandIcon>
                    <CommandText $double={label.includes("\n")}>
                      {label.split("\n").map((line) => <CommandLine key={line}>{withAccessKey(line)}</CommandLine>)}
                    </CommandText>
                  </Command>
                ))}
              </Commands>
            </Sheet>
          </Page>

          <BottomBar>
            <OptionsButton>
              <svg width="8" height="8"><circle cx="4" cy="4" r="3.500" fill="#e8604c" stroke="#f0a090" /></svg>
              Options
              <svg width="8" height="5"><path d="M0 0H8L4 4.500Z" fill="#222" /></svg>
            </OptionsButton>
            <BarRule />
            {"Shift  Last Bill Details - "}
            <BarRule />
            {" F6=Sch  F9=Other Details  Ctrl+F9=Print Copies"}
          </BottomBar>
        </Main>

        <Dock>
          <DockTab>Document Windows</DockTab>
        </Dock>
      </Body>
    </Window>
  );
}
